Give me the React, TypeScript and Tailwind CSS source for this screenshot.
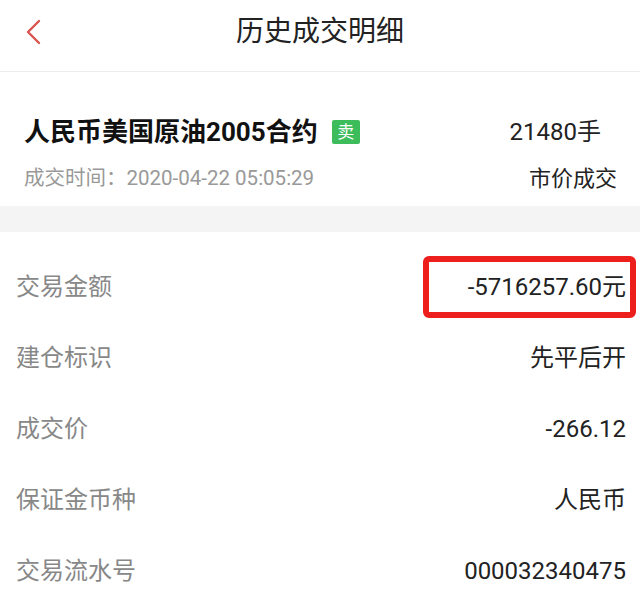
const rows = [
  { label: "交易金额", value: "-5716257.60元", mark: true },
  { label: "建仓标识", value: "先平后开" },
  { label: "成交价", value: "-266.12" },
  { label: "保证金币种", value: "人民币" },
  { label: "交易流水号", value: "000032340475" },
];

const font = { fontFamily: '"Roboto", "Noto Sans CJK SC", sans-serif' };

export default function App() {
  return (
    <div className="w-[640px] h-[591px] overflow-hidden bg-white" style={font}>
      {/* Top bar */}
      <header className="relative h-[72px] flex items-center justify-center border-b border-[#ececec]">
        <button className="absolute left-[22px] top-[18px] p-0">
          <svg width="22" height="28" viewBox="0 0 22 28" fill="none">
            <path d="M17 3 L6 14 L17 25" stroke="#d9534f" strokeWidth="2.4" strokeLinecap="round" strokeLinejoin="round" />
          </svg>
        </button>
        <h1 className="text-[28px] text-[#222] -mt-[8px]">历史成交明细</h1>
      </header>

      {/* Contract summary */}
      <section className="px-6 pt-[42px] pb-[11px]">
        <div className="flex items-center justify-between">
          <div className="flex items-center gap-[14px]">
            <span className="text-[26px] font-bold text-[#111] leading-[36px]">人民币美国原油2005合约</span>
            <span className="w-[28px] h-[24px] flex items-center justify-center rounded-[2px] bg-[#3dbc5c] text-white text-[17px] leading-none">卖</span>
          </div>
          <span className="text-[24px] text-[#222] mr-[15px]">21480手</span>
        </div>
        <div className="flex items-center justify-between mt-[12px]">
          <span className="text-[20.5px] text-[#999]">成交时间：2020-04-22 05:05:29</span>
          <span className="text-[22px] text-[#222] -mr-[1px]">市价成交</span>
        </div>
      </section>

      <div className="h-[26px] bg-[#f4f4f4]" />

      {/* Detail rows */}
      <section className="pt-[19px] pl-4 pr-[14px]">
        {rows.map((r) => (
          <div key={r.label} className="h-[71px] flex items-center justify-between">
            <span className="text-[24px] text-[#888]">{r.label}</span>
            <span className="relative block text-[24px] leading-[32px] text-[#222]">
              {r.value}
              {r.mark && (
                <span className="absolute left-[-45px] right-[-10px] top-[-15px] bottom-[-15px] border-[6px] border-[#ec1f1c] rounded-[6px]" />
              )}
            </span>
          </div>
        ))}
      </section>
    </div>
  );
}
